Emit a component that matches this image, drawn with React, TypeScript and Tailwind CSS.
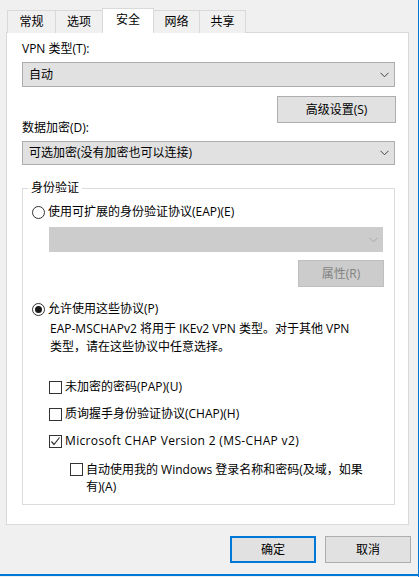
import React from "react";

function Chevron({ color = "#444" }: { color?: string }) {
  return (
    <svg width="9" height="6" viewBox="0 0 9 6" className="block">
      <path d="M0.5 0.8 L4.5 4.8 L8.5 0.8" fill="none" stroke={color} strokeWidth="1" />
    </svg>
  );
}

function Radio({ checked }: { checked?: boolean }) {
  return (
    <div className="w-[13px] h-[13px] rounded-full border border-[#333333] bg-white flex items-center justify-center shrink-0">
      {checked && <div className="w-[7px] h-[7px] rounded-full bg-[#1a1a1a]" />}
    </div>
  );
}

function Check({ checked }: { checked?: boolean }) {
  return (
    <div className="w-[13px] h-[13px] border border-[#333333] bg-white flex items-center justify-center shrink-0">
      {checked && (
        <svg width="11" height="11" viewBox="0 0 11 11" className="block">
          <path d="M1.5 5.5 L4 8.5 L9.5 1.5" fill="none" stroke="#333333" strokeWidth="1.2" />
        </svg>
      )}
    </div>
  );
}

export default function App() {
  const tabBase =
    "border border-b-0 border-[#d9d9d9] flex items-center justify-center leading-[16px]";
  return (
    <div className="w-[419px] h-[577px] bg-[#f0f0f0] border-r border-[#0078d7] flex flex-col text-[12px] text-black font-['Open_Sans','Noto_Sans_CJK_SC',sans-serif] overflow-hidden">
      {/* Tabs */}
      <div className="relative z-10 flex items-start pl-[7px] pt-[8px] h-[33px]">
        <div className={`${tabBase} mt-[2px] h-[23px] w-[49px] bg-[#f0f0f0]`}>常规</div>
        <div className={`${tabBase} -ml-px mt-[2px] h-[23px] w-[48px] bg-[#f0f0f0]`}>选项</div>
        <div className={`${tabBase} relative z-10 -ml-px h-[25px] w-[52px] bg-white pb-[2px]`}>安全</div>
        <div className={`${tabBase} -ml-px mt-[2px] h-[23px] w-[47px] bg-[#f0f0f0]`}>网络</div>
        <div className={`${tabBase} -ml-px mt-[2px] h-[23px] w-[47px] bg-[#f0f0f0]`}>共享</div>
      </div>

      {/* Panel */}
      <div className="-mt-px ml-[6px] w-[403px] h-[493px] border border-[#d9d9d9] bg-white pl-[15px] flex flex-col">
        <div className="mt-[8px] h-[16px] leading-[16px]">VPN 类型(T):</div>
        <div className="mt-[5px] w-[373px] h-[25px] border border-[#adadad] bg-[#e1e1e1] flex items-center justify-between pl-[6px] pr-[5px]">
          <span className="leading-[16px]">自动</span>
          <Chevron />
        </div>
        <div className="mt-[9px] ml-[255px] w-[119px] h-[27px] border border-[#adadad] bg-[#e1e1e1] flex items-center justify-center leading-[16px]">
          高级设置(S)
        </div>
        <div className="-mt-[2px] h-[14px] leading-[14px]">数据加密(D):</div>
        <div className="mt-[6px] w-[373px] h-[24px] border border-[#adadad] bg-[#e1e1e1] flex items-center justify-between pl-[6px] pr-[5px]">
          <span className="leading-[16px]">可选加密(没有加密也可以连接)</span>
          <Chevron />
        </div>

        {/* Group box */}
        <div className="relative mt-[23px] w-[373px] h-[317px] border border-[#dcdcdc] flex flex-col pl-[9px]">
          <div className="absolute left-[5px] -top-[9px] px-[3px] bg-white leading-[16px]">身份验证</div>

          <div className="mt-[15px] h-[16px] flex items-center gap-[3px]">
            <Radio />
            <span className="leading-[16px]">使用可扩展的身份验证协议(EAP)(E)</span>
          </div>
          <div className="mt-[7px] ml-[17px] w-[334px] h-[25px] bg-[#cccccc] flex items-center justify-end pr-[5px]">
            <Chevron color="#a8a8a8" />
          </div>
          <div className="mt-[8px] ml-[266px] w-[86px] h-[27px] border border-[#bfbfbf] bg-[#cccccc] text-[#838383] flex items-center justify-center leading-[16px]">
            属性(R)
          </div>

          <div className="mt-[14px] h-[16px] flex items-center gap-[3px]">
            <Radio checked />
            <span className="leading-[16px]">允许使用这些协议(P)</span>
          </div>
          <div className="mt-[3px] ml-[18px] leading-[18px]">
            EAP-MSCHAPv2 将用于 IKEv2 VPN 类型。对于其他 VPN
            <br />
            类型，请在这些协议中任意选择。
          </div>

          <div className="mt-[23px] ml-[17px] h-[16px] flex items-center gap-[3px]">
            <Check />
            <span className="leading-[16px]">未加密的密码(PAP)(U)</span>
          </div>
          <div className="mt-[11px] ml-[17px] h-[16px] flex items-center gap-[3px]">
            <Check />
            <span className="leading-[16px]">质询握手身份验证协议(CHAP)(H)</span>
          </div>
          <div className="mt-[11px] ml-[17px] h-[16px] flex items-center gap-[3px]">
            <Check checked />
            <span className="leading-[16px] tracking-[0.35px]">Microsoft CHAP Version 2 (MS-CHAP v2)</span>
          </div>
          <div className="mt-[12px] ml-[38px] flex items-start gap-[3px]">
            <div className="mt-[2px]">
              <Check />
            </div>
            <span className="leading-[17px]">
              自动使用我的 Windows 登录名称和密码(及域，如果
              <br />
              有)(A)
            </span>
          </div>
        </div>
      </div>

      {/* Buttons */}
      <div className="mt-[11px] flex justify-end gap-[9px] pr-[7px]">
        <div className="w-[86px] h-[27px] border-2 border-[#0078d7] bg-[#e1e1e1] flex items-center justify-center leading-[16px]">
          确定
        </div>
        <div className="w-[86px] h-[27px] border border-[#adadad] bg-[#e1e1e1] flex items-center justify-center leading-[16px]">
          取消
        </div>
      </div>

      <div className="mt-auto mb-[1px] h-[2px] bg-[#0078d7]" />
    </div>
  );
}
